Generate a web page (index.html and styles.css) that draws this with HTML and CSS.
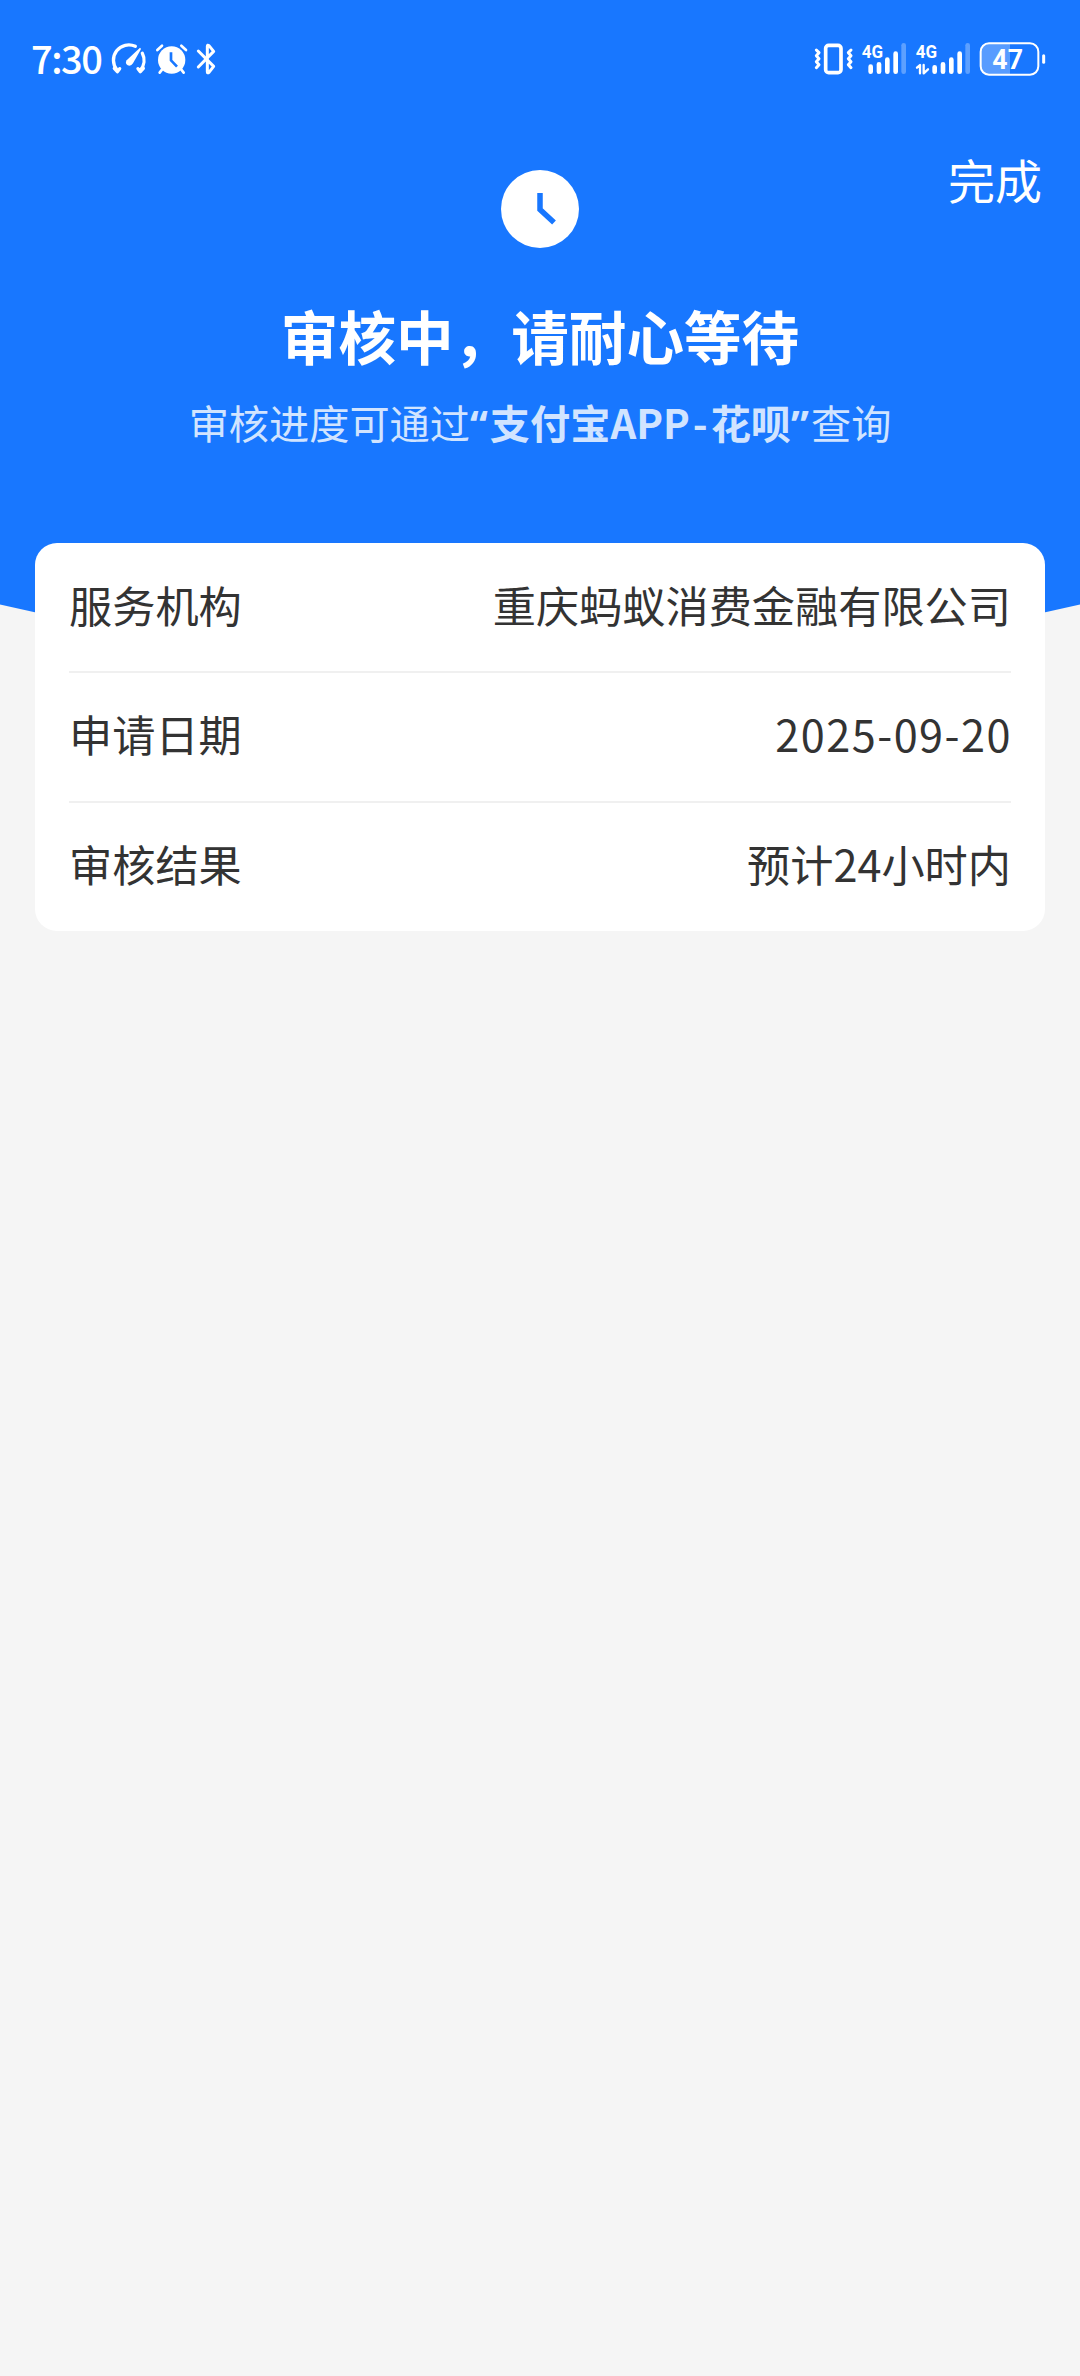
FILE: index.html
```html
<!DOCTYPE html>
<html lang="zh-CN">
<head>
  <meta charset="UTF-8" />
  <meta name="viewport" content="width=device-width, initial-scale=1.0" />
  <title>审核中</title>
  <link rel="stylesheet" href="styles.css">
</head>
<body>
  <header class="hero">
    <div class="status-bar">
      <span class="time">7:30</span>
      <div class="status-icons">
        <svg width="37" height="35" viewBox="273 36 111 105">
          <path class="line" stroke-width="10" d="M283 115l9 10 7-9M291 120A46 46 0 0 1 346 49M367 70A46 46 0 0 1 361 121M354 116l7 9 9-10"/>
          <path class="fill" d="M360 53q4 2 2 6L339 100q-6 10-16 6-9-6-3-15z"/>
        </svg>
        <svg width="33" height="35" viewBox="405 36 99 105">
          <circle class="fill" cx="455" cy="90" r="41"/>
          <path class="line" stroke-width="8" d="M412 60l14-13M484 47l14 13M426 119l-7 9M484 119l7 9"/>
          <path class="hand" stroke-width="8" d="M453 67v24l18 19"/>
        </svg>
        <svg width="23" height="35" viewBox="525 36 69 105">
          <path class="line" stroke-width="9" d="M535 63l46 46-14 18q-5 4-5-2V49q0-6 5-2l14 17-46 47"/>
        </svg>
      </div>
      <div class="status-icons right">
        <svg width="39" height="35" viewBox="42 36 117 105">
          <rect class="line" stroke-width="11" x="77" y="46" width="46" height="82" rx="9"/>
          <path class="line" stroke-width="9" d="M49 60l8 8-8 9 8 9-8 9 8 9-8 9M153 60l-8 8 8 9-8 9 8 9-8 9 8 9"/>
        </svg>
        <svg width="46" height="35" viewBox="183 36 138 105">
          <text class="net" x="185" y="85" textLength="64" lengthAdjust="spacingAndGlyphs">4G</text>
          <path class="line" stroke-width="14" d="M212 110v15M237 103v22M262 89v36M287 71v54"/>
          <path class="line faint" stroke-width="14" d="M311 46v79"/>
        </svg>
        <svg width="56" height="35" viewBox="345 36 168 105">
          <text class="net" x="347" y="85" textLength="64" lengthAdjust="spacingAndGlyphs">4G</text>
          <path class="line" stroke-width="7" d="M351 113l9-8v25M371 105v25l13-12"/>
          <path class="line" stroke-width="14" d="M404 112v13M429 103v22M454 89v36M479 71v54"/>
          <path class="line faint" stroke-width="14" d="M503 46v79"/>
        </svg>
        <svg width="68" height="35" viewBox="537 36 204 105">
          <path class="charge" d="M563 42h67v90h-67q-20 0-20-20V62q0-20 20-20z"/>
          <rect class="line" stroke-width="6" x="542" y="40" width="173" height="94" rx="25"/>
          <path class="line" stroke-width="9" d="M731 77v20"/>
          <text class="level" x="577" y="117" textLength="92" lengthAdjust="spacingAndGlyphs">47</text>
        </svg>
      </div>
    </div>
    <div class="nav">
      <a class="done">完成</a>
    </div>
    <div class="result">
      <svg class="clock" width="78" height="78" viewBox="0 0 78 78">
        <circle class="fill" cx="39" cy="39" r="39"/>
        <path class="tick" d="M39 23v16.500l14 13"/>
      </svg>
      <h1>审核中，请耐心等待</h1>
      <p>审核进度可通过<b><span class="quote">“</span>支付宝APP<span class="dash">-</span>花呗<span class="quote">”</span></b>查询</p>
    </div>
  </header>
  <main class="card">
    <div class="row">
      <span>服务机构</span>
      <span>重庆蚂蚁消费金融有限公司</span>
    </div>
    <div class="row">
      <span>申请日期</span>
      <span class="date">2025-09-20</span>
    </div>
    <div class="row">
      <span>审核结果</span>
      <span>预计24小时内</span>
    </div>
  </main>
</body>
</html>
```
FILE: styles.css
```css
:root {
  --blue: #1877ff;
  --bg: #f5f5f5;
  --text: #333333;
  --line: #f0f0f0;
}
* { box-sizing: border-box; margin: 0; padding: 0; }
body {
  background: var(--bg);
  color: var(--text);
  font-family: "Noto Sans CJK SC", sans-serif;
  min-height: 100vh;
}
.hero {
  height: 670px;
  background: var(--blue);
  color: #fff;
  clip-path: circle(2400px at 50% -1734px);
}

/* status bar */
.status-bar {
  display: flex; align-items: center;
  height: 119px; padding: 0 33px 0 31px;
}
.time {
  width: 80px; padding-bottom: 4px;
  font-size: 38px; font-weight: 500; line-height: 1;
  letter-spacing: -1.5px;
}
.status-icons { display: flex; gap: 7px; }
.status-icons.right { gap: 8px; margin-left: auto; }
svg { display: block; overflow: visible; }
.fill { fill: #fff; }
.line {
  fill: none; stroke: #fff;
  stroke-linecap: round; stroke-linejoin: round;
}
.faint { opacity: 0.3; }
.hand { fill: none; stroke: var(--blue); }
.charge { fill: #fff; opacity: 0.28; }
.net, .level { fill: #fff; font-family: Roboto, sans-serif; }
.net { font-size: 53px; font-weight: 700; }
.level { font-size: 82px; font-weight: 700; }

.nav {
  display: flex; justify-content: flex-end;
  height: 51px; padding: 25px 38px 0 0;
}
.done { font-size: 47px; line-height: 70px; }

.result {
  display: flex; flex-direction: column; align-items: center;
}
.tick { fill: none; stroke: var(--blue); stroke-width: 5.5; }
h1 {
  margin-top: 43px;
  font-size: 57.6px; font-weight: 700; line-height: 88px;
}
.result p {
  margin-top: 13px;
  font-size: 40.2px; line-height: 60px;
  color: #d1e4ff;
  white-space: nowrap;
}
.quote { font-family: "Noto Sans", sans-serif; letter-spacing: 2px; }
.dash { padding: 0 3px; }

/* details */
.card {
  position: relative;
  margin: -127px 35px 0;
  padding: 0 34px;
  background: #fff;
  border-radius: 22px;
}
.row {
  display: flex; align-items: center; justify-content: space-between;
  height: 130px; padding-bottom: 9px;
  font-size: 43.2px;
}
.row:first-child { height: 128px; padding-bottom: 6px; }
.row + .row { border-top: 2px solid var(--line); }
.date { letter-spacing: 1.5px; margin-right: -1px; }
```
